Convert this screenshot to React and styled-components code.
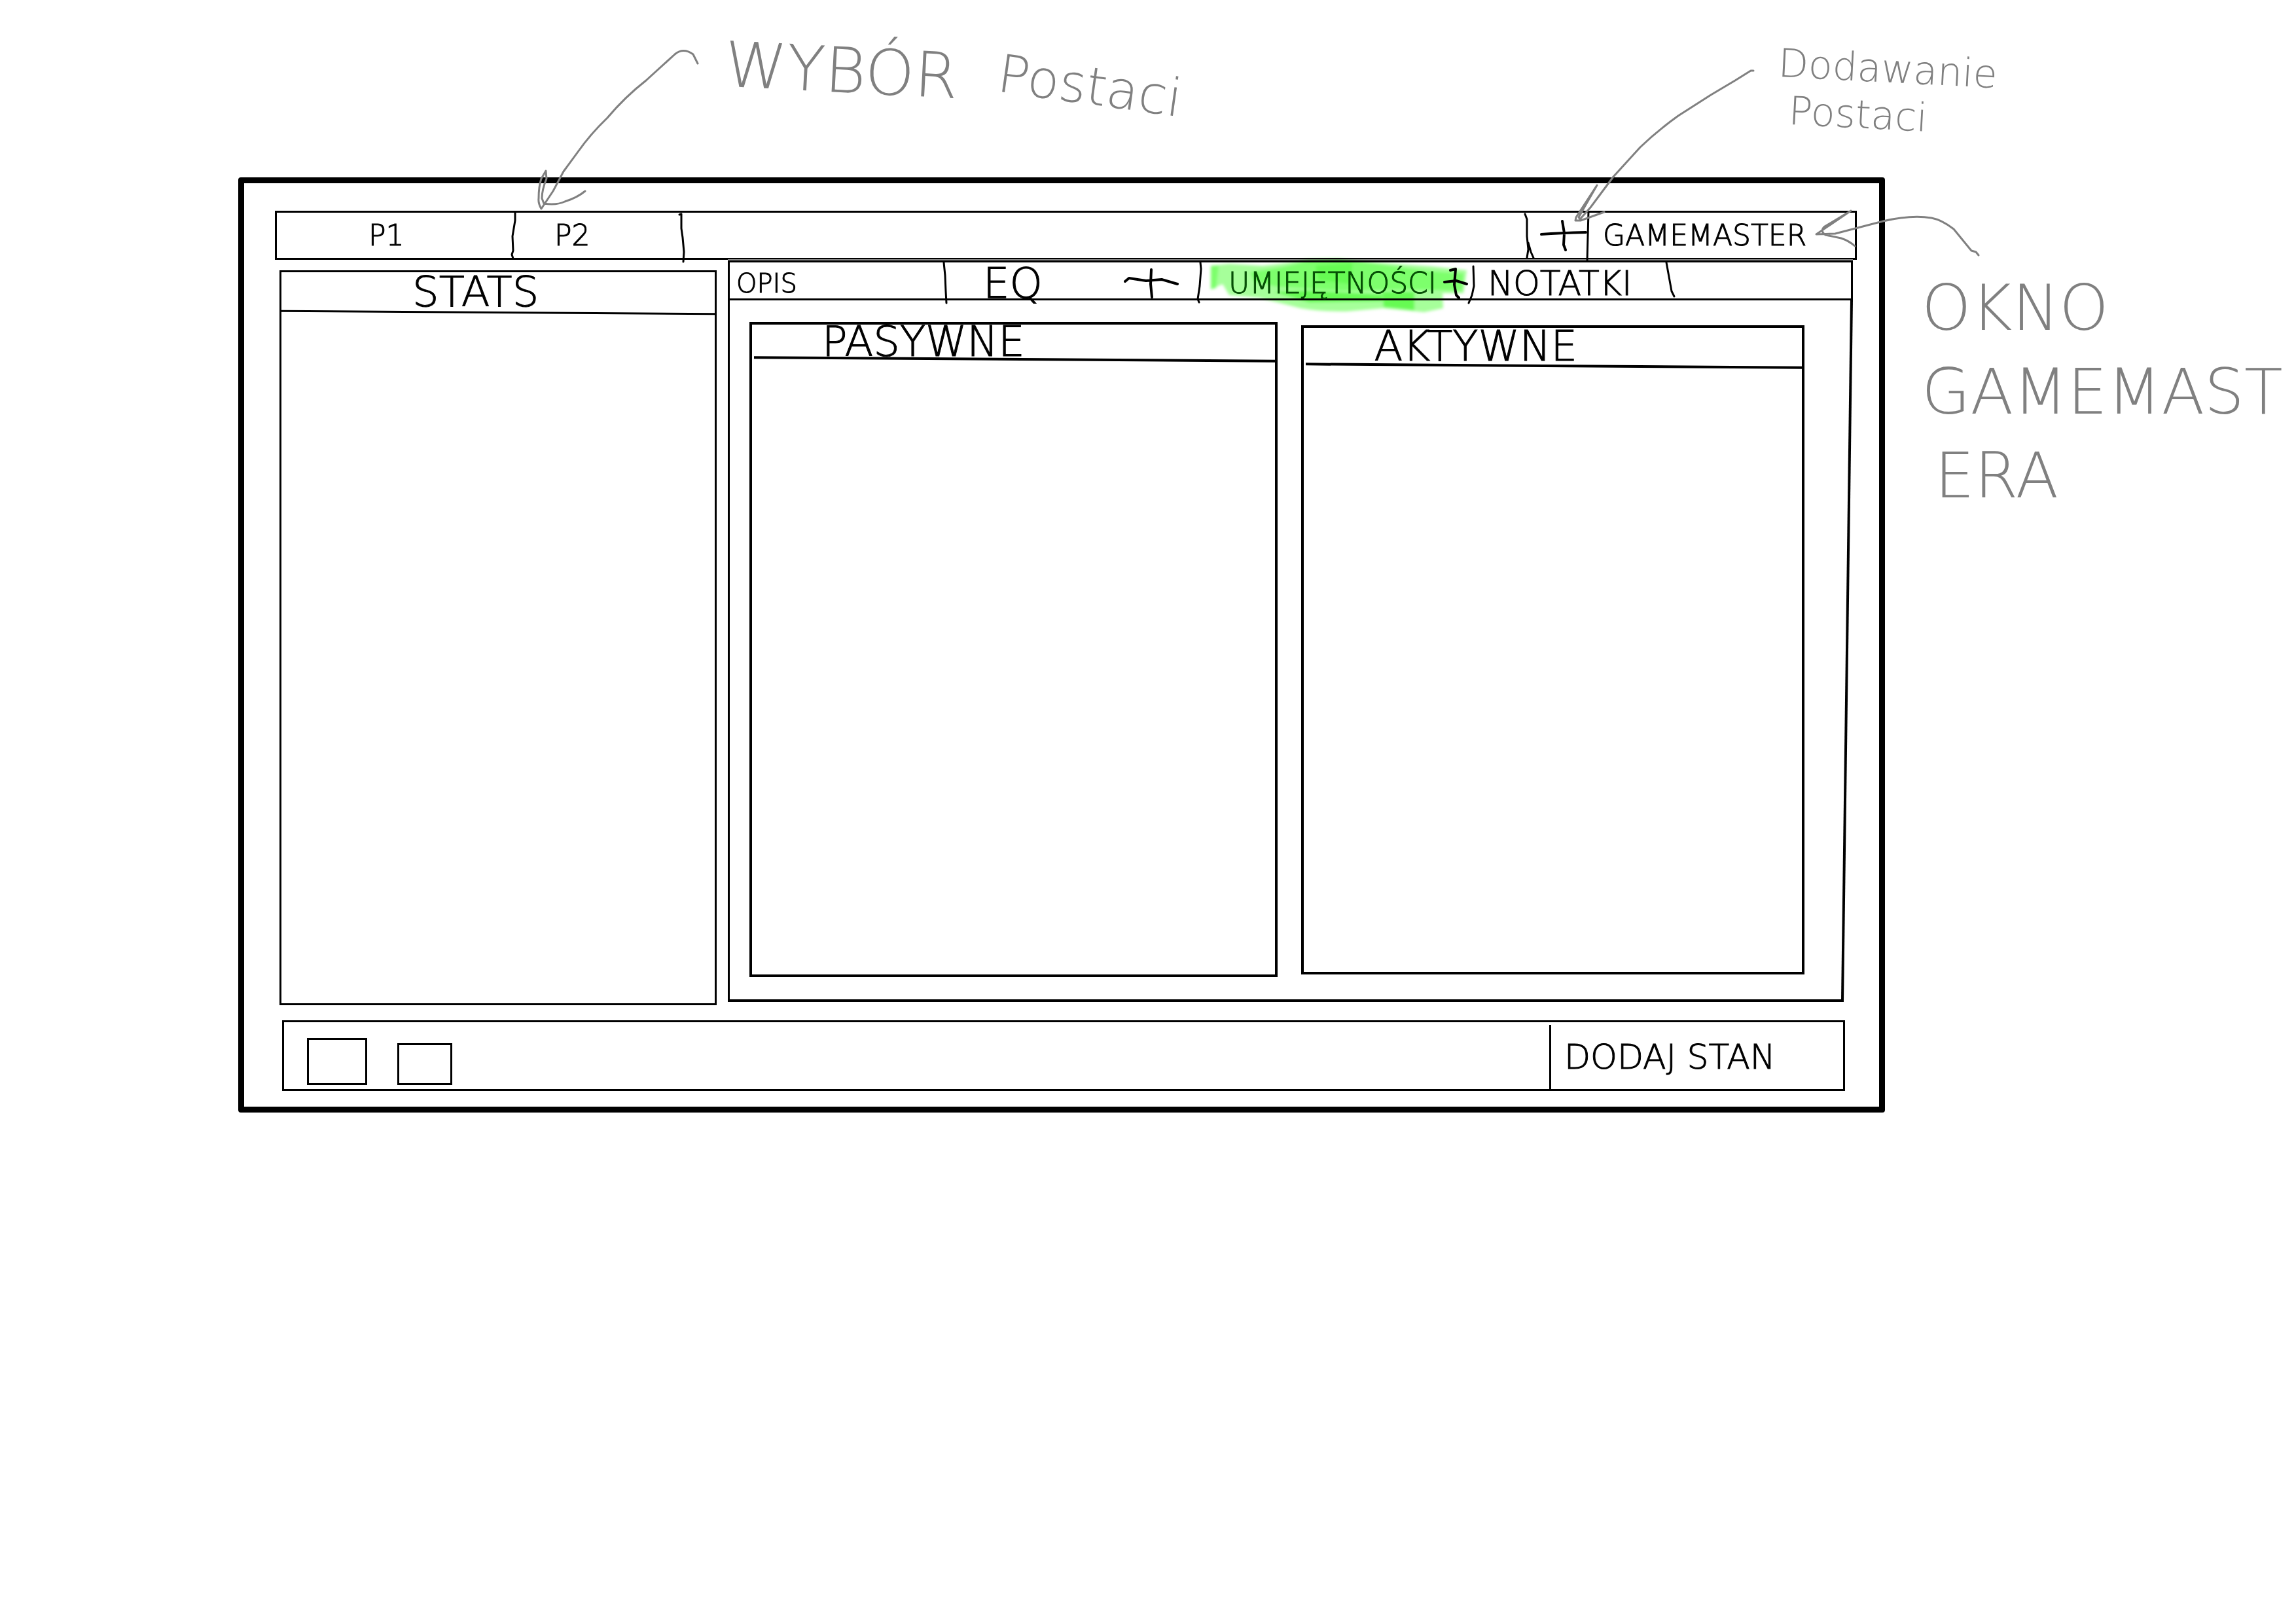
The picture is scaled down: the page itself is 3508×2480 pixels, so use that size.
import React from "react";
import styled, { createGlobalStyle } from "styled-components";

const INK = "#000";
const PENCIL = "#808080";
const LINE = "3px";

const GlobalStyle = createGlobalStyle`
  *, *::before, *::after { box-sizing: border-box; }
  body {
    margin: 0;
    background: #fff;
    color: ${INK};
    font-family: "DejaVu Sans", "Noto Sans", sans-serif;
    font-weight: 200;
    -webkit-text-stroke: 1px currentColor;
  }
  button {
    margin: 0;
    padding: 0;
    border: 0;
    background: none;
    color: inherit;
    font: inherit;
    line-height: 1;
    cursor: pointer;
    white-space: nowrap;
  }
`;

const Page = styled.div`
  position: relative;
  padding-left: 364px;
`;

const TopNotes = styled.header`
  display: grid;
  grid-template-columns: 1615fr 786fr;
  padding-left: 743px;
  height: 271px;
  color: ${PENCIL};
  -webkit-text-stroke: 0;
`;

const PickNote = styled.p`
  display: flex;
  align-items: flex-start;
  gap: 60px;
  margin: 0;
  padding-top: 60px;
  line-height: 1;
`;

const Word = styled.span`
  margin-top: ${(p) => p.$drop || 0}px;
  font-size: ${(p) => p.$size}px;
  transform: rotate(${(p) => p.$tilt}deg);
  white-space: nowrap;
`;

const AddNote = styled.p`
  margin: 0;
  padding-top: 60px;
  font-size: 60px;
  line-height: 72px;
  transform: rotate(3deg);
  transform-origin: left top;
`;

const Indent = styled.span`
  display: block;
  padding-left: ${(p) => p.$by}px;
`;

const Columns = styled.div`
  display: grid;
  grid-template-columns: 2516fr 628fr;
  align-items: start;
`;

const SideNote = styled.aside`
  padding: 136px 0 0 56px;
  color: ${PENCIL};
  font-size: 96px;
  line-height: 128px;
  white-space: nowrap;
  -webkit-text-stroke: 0;
`;

const Window = styled.main`
  padding: 42px 0 24px;
  border: 9px solid ${INK};
  border-radius: 4px;
`;

const TopBar = styled.nav`
  display: grid;
  grid-template-columns: 362fr 256fr 1292fr 93fr 408fr;
  height: 75px;
  margin: 0 34px 0 47px;
  border: ${LINE} solid ${INK};
`;

const Cell = styled.div`
  position: relative;
  display: flex;
  align-items: center;
  min-width: 0;
  padding-left: ${(p) => p.$indent || 0}px;
  gap: ${(p) => p.$gap || 0}px;
`;

const Label = styled.button`
  font-size: ${(p) => p.$size}px;
  color: ${(p) => (p.$marked ? "#064d06" : INK)};
`;

const PlusButton = styled.button`
  flex: none;
  display: flex;
  svg { display: block; }
`;

const DividerSvg = styled.svg`
  position: absolute;
  top: 0;
  right: -10px;
  overflow: visible;
  pointer-events: none;
`;

const MarkerSvg = styled.svg`
  position: absolute;
  top: -7px;
  left: 17px;
  overflow: visible;
  pointer-events: none;
  mix-blend-mode: multiply;
`;

const Body = styled.div`
  display: grid;
  grid-template-columns: 668fr 1719fr;
  gap: 17px;
  align-items: start;
  margin: 1px 40px 0 54px;
`;

const Panel = styled.section`
  margin-top: ${(p) => p.$drop || 0}px;
  min-height: ${(p) => p.$tall}px;
  border: ${(p) => p.$line || 3}px solid ${INK};
`;

const PanelTitle = styled.h2`
  position: relative;
  margin: 0;
  padding-left: ${(p) => p.$indent}px;
  height: ${(p) => p.$height}px;
  font-size: 64px;
  font-weight: inherit;
  line-height: ${(p) => p.$height}px;

  &::after {
    content: "";
    position: absolute;
    left: ${(p) => p.$inset || 0}px;
    right: 0;
    bottom: -3px;
    height: ${(p) => p.$line || 3}px;
    background: ${INK};
    transform: skewY(0.4deg);
  }
`;

const Sheet = styled.section`
  min-width: 0;
`;

const Tabs = styled.nav`
  display: grid;
  grid-template-columns: 329fr 389fr 416fr 301fr 278fr;
  height: 61px;
  border: ${LINE} solid ${INK};
  box-shadow: 0 -2px 0 #888;
`;

const SheetBody = styled.div`
  position: relative;
  display: grid;
  grid-template-columns: 808fr 769fr;
  gap: 36px;
  align-items: start;
  padding: 33px 74px 38px 30px;
  border-left: ${LINE} solid ${INK};

  &::before {
    content: "";
    position: absolute;
    left: -3px;
    right: 14px;
    bottom: 0;
    height: 4px;
    background: ${INK};
  }

  &::after {
    content: "";
    position: absolute;
    top: 0;
    right: 0;
    bottom: 0;
    width: 4px;
    background: ${INK};
    transform: skewX(-0.75deg);
    transform-origin: top;
  }
`;

const StatusBar = styled.footer`
  display: grid;
  grid-template-columns: 1933fr 449fr;
  height: 108px;
  margin: 23px 52px 0 58px;
  border: ${LINE} solid ${INK};
`;

const Slots = styled.div`
  display: flex;
  align-items: flex-end;
  gap: 46px;
  padding: 0 0 6px 35px;
`;

const Slot = styled.button`
  width: ${(p) => p.$w}px;
  height: ${(p) => p.$h}px;
  border: ${LINE} solid ${INK};
`;

const AddState = styled.div`
  display: flex;
  align-items: center;
  margin-top: 4px;
  padding-left: 20px;
  border-left: ${LINE} solid ${INK};
`;

const Arrows = styled.svg`
  position: absolute;
  top: 0;
  left: 0;
  width: 100%;
  height: auto;
  pointer-events: none;
`;

function Divider({ d }) {
  return (
    <DividerSvg width="20" height="70" viewBox="0 0 20 70" fill="none" stroke={INK} strokeWidth="3" strokeLinecap="round" strokeLinejoin="round" aria-hidden="true">
      <path d={d} />
    </DividerSvg>
  );
}

function Plus({ label, width, height, d }) {
  return (
    <PlusButton type="button" aria-label={label}>
      <svg width={width} height={height} viewBox={`0 0 ${width} ${height}`} fill="none" stroke={INK} strokeWidth="4" strokeLinecap="round" strokeLinejoin="round">
        <path d={d} />
      </svg>
    </PlusButton>
  );
}

function Marker() {
  return (
    <MarkerSvg width="392" height="84" viewBox="0 0 392 84" aria-hidden="true">
      <defs>
        <filter id="soft" x="-5%" y="-10%" width="110%" height="120%">
          <feGaussianBlur stdDeviation="2" />
        </filter>
      </defs>
      <g filter="url(#soft)">
        <path fill="#a6ff9a" d="M0 12L28 9L79 12Q120 8 148 2L194 1L251 7L338 13L391 19L386 54L354 54L355 77L326 83L263 77L206 82Q165 82 137 77L74 61L28 57L18 40L0 48Z" />
        <path fill="#7dff6c" d="M0 12L12 12L8 46L0 48ZM60 22L110 14L150 5L194 3L251 9L330 20L386 24L384 50L300 48L200 50L100 44L66 36Z" />
        <path fill="#66fb52" d="M160 12L216 8L214 40L164 34ZM262 52L311 52L311 80L264 75ZM96 52L150 50L262 56L262 66L150 68Z" />
      </g>
    </MarkerSvg>
  );
}

export default function App() {
  return (
    <>
      <GlobalStyle />
      <Page>
        <TopNotes>
          <PickNote>
            <Word $size={96} $tilt={3}>WYBÓR</Word>
            <Word $size={80} $tilt={8} $drop={32}>Postaci</Word>
          </PickNote>
          <AddNote>
            Dodawanie
            <Indent $by={20}>Postaci</Indent>
          </AddNote>
        </TopNotes>

        <Columns>
          <Window>
            <TopBar>
              <Cell $indent={140}>
                <Label type="button" $size={44}>P1</Label>
                <Divider d="M12 0V12L8 36L9 58L7 64L9 70" />
              </Cell>
              <Cell $indent={62}>
                <Label type="button" $size={44}>P2</Label>
                <Divider d="M7 3L10 2L10 24L12 38L14 60L13 75" />
              </Cell>
              <Cell>
                <Divider d="M7 2L10 10L10 36L12 56L10 69M12 46L16 60L20 69" />
              </Cell>
              <Cell $indent={20}>
                <Plus label="Dodaj postać" width={72} height={48} d="M2 22Q30 20 70 19M34 2L37 20L36 38L39 46" />
                <Divider d="M11 -2L9 74" />
              </Cell>
              <Cell $indent={23}>
                <Label type="button" $size={44}>GAMEMASTER</Label>
              </Cell>
            </TopBar>

            <Body>
              <Panel $drop={15} $tall={1123}>
                <PanelTitle $indent={200} $height={60}>STATS</PanelTitle>
              </Panel>

              <Sheet>
                <Tabs>
                  <Cell $indent={10}>
                    <Label type="button" $size={40}>OPIS</Label>
                    <Divider d="M8 0L10 20L11 44L12 62" />
                  </Cell>
                  <Cell $indent={58} $gap={124}>
                    <Label type="button" $size={64}>EQ</Label>
                    <Plus label="Dodaj przedmiot" width={84} height={46} d="M2 20L8 15L34 19L58 17L82 24M42 2L41 24L43 44" />
                    <Divider d="M11 0L12 10L10 36L7 56L9 61" />
                  </Cell>
                  <Cell $indent={44} $gap={10}>
                    <Label type="button" $size={44} $marked>UMIEJĘTNOŚCI</Label>
                    <Plus label="Dodaj umiejętność" width={38} height={48} d="M11 4L19 2L17 26L20 42L24 46M2 22L20 20L36 25" />
                    <Marker />
                    <Divider d="M12 6L13 36L10 50L5 62" />
                  </Cell>
                  <Cell $indent={24}>
                    <Label type="button" $size={52}>NOTATKI</Label>
                    <Divider d="M6 0L10 22L14 44L18 52" />
                  </Cell>
                </Tabs>
                <SheetBody>
                  <Panel $tall={1001} $line={4}>
                    <PanelTitle $indent={107} $height={52} $inset={3} $line={4}>PASYWNE</PanelTitle>
                  </Panel>
                  <Panel $drop={5} $tall={992} $line={4}>
                    <PanelTitle $indent={107} $height={57} $inset={3} $line={4}>AKTYWNE</PanelTitle>
                  </Panel>
                </SheetBody>
              </Sheet>
            </Body>

            <StatusBar>
              <Slots>
                <Slot type="button" aria-label="Stan 1" $w={92} $h={72} />
                <Slot type="button" aria-label="Stan 2" $w={84} $h={64} />
              </Slots>
              <AddState>
                <Label type="button" $size={52}>DODAJ STAN</Label>
              </AddState>
            </StatusBar>
          </Window>

          <SideNote>
            OKNO
            <br />
            GAMEMAST
            <Indent $by={20}>ERA</Indent>
          </SideNote>
        </Columns>

        <Arrows viewBox="0 0 3508 420" fill="none" stroke={PENCIL} strokeWidth="3" strokeLinecap="round" strokeLinejoin="round" aria-hidden="true">
          <path d="M1066 97L1059 83Q1044 72 1031 83L987 123Q955 148 928 180Q902 205 883 232L861 262L845 292L827 319Q822 310 823 303Q823 285 827 273L834 261L835 273Q828 290 828 303L831 311Q850 314 863 308Q882 302 894 292" />
          <path d="M2679 108H2675L2651 123L2614 145L2564 177Q2532 200 2506 225L2465 270L2430 317L2414 335L2412 332L2440 283L2408 332L2407 337H2415L2451 324" />
          <path d="M3023 390L3019 385L3012 383L2985 350Q2967 336 2951 333Q2920 328 2877 338L2804 357L2775 358L2828 322L2788 346Q2780 353 2789 359L2813 364Q2825 368 2834 376" />
        </Arrows>
      </Page>
    </>
  );
}
